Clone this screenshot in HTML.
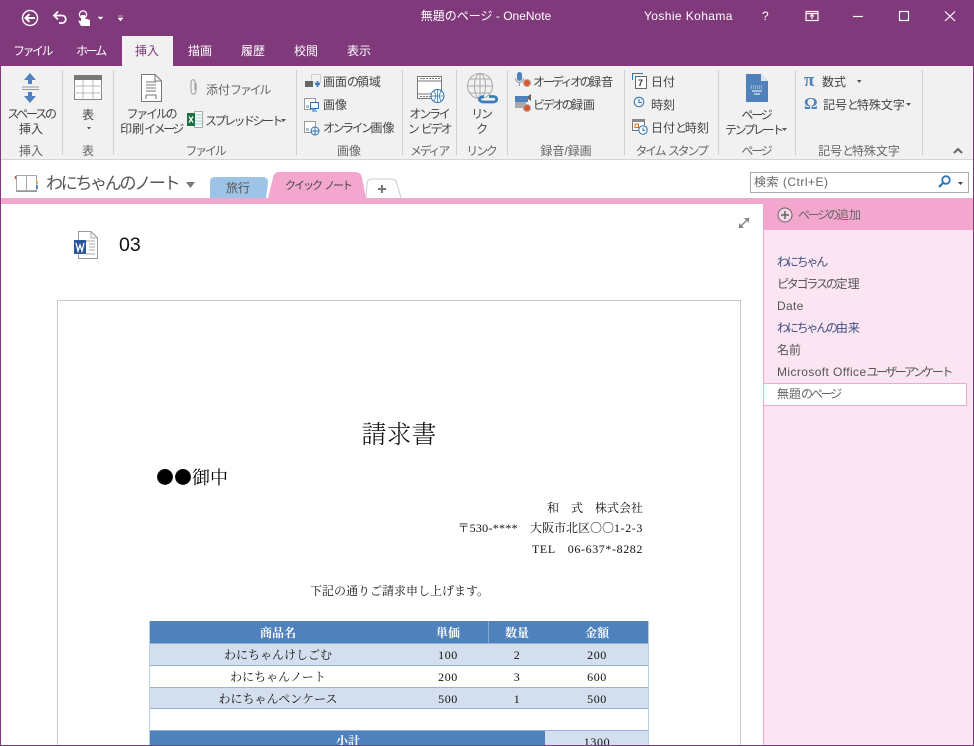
<!DOCTYPE html>
<html lang="ja"><head><meta charset="utf-8"><title>無題のページ - OneNote</title>
<style>
html,body{margin:0;padding:0;background:#fff}
#p{position:relative;width:974px;height:746px;overflow:hidden;background:#fff;font-family:"Liberation Sans","Noto Sans CJK JP",sans-serif;font-size:12px;color:#444}
.t{position:absolute;white-space:nowrap;line-height:16px}
.c{text-align:center;transform:translateX(-50%)}
.r{position:absolute}
.w{color:#fff}
.g{color:#666}
.sep{position:absolute;top:70px;height:85px;width:1px;background:#d0d0d0}
svg{position:absolute;overflow:visible}
.s{font-family:"Liberation Serif","Noto Serif CJK SC",serif;color:#111;font-size:12px}
i{font-style:normal;letter-spacing:-2.2px}
i.n{letter-spacing:-2.5px}
em{font-style:normal;letter-spacing:.6px}
em.n{letter-spacing:.3px}
b.o{font-weight:normal;font-family:"Noto Serif CJK SC",serif}
</style></head><body><div id="p">
<div class="r" style="left:0;top:0;width:974px;height:66px;background:#80397b"></div>
<div class="r" style="left:1px;top:66px;width:972px;height:93px;background:#f1f1f1"></div>
<div class="r" style="left:1px;top:159px;width:972px;height:1px;background:#d4d4d4"></div>
<div class="r" style="left:122px;top:36px;width:51px;height:30px;background:#f1f1f1"></div>
<div class="r" style="left:0;top:66px;width:1px;height:680px;background:#80397b"></div>
<div class="r" style="left:973px;top:66px;width:1px;height:680px;background:#80397b"></div>

<!-- QAT -->
<svg style="left:0;top:0" width="140" height="36" fill="none" stroke="#fff">
<circle cx="30" cy="18" r="7.5" stroke-width="1.4"/><path d="M35 18H26M29.5 14.2L25.5 18L29.5 21.8" stroke-width="2"/>
<path d="M55 15.5H62C67 15.5 67 23 62 23H59M58 11.5L54 15.500L58 19.500" stroke-width="1.8"/>
<path d="M81 15V21L78 20.500L81 26H90V20L85 18.500V15Z" fill="#fff" stroke="none"/><circle cx="83" cy="14.500" r="3.600" stroke-width="1.300"/>
<path d="M98 17H103L100.500 19.500Z M118 16H123 M118 18H123L120.500 21Z" fill="#fff" stroke="#fff" stroke-width=".5"/>
</svg>
<div class="t w c" style="left:486px;top:8px">無題のページ - OneNote</div>
<div class="t w" style="left:644px;top:8px;letter-spacing:.4px">Yoshie Kohama</div>
<div class="t w" style="left:762px;top:8px">?</div>
<svg style="left:800px;top:0" width="174" height="36" fill="none" stroke="#fff" stroke-width="1.2">
<rect x="6" y="11.500" width="12" height="9"/><path d="M6 13.500H18M12 19V15M10 16.500L12 14.500L14 16.500"/>
<path d="M53 16.500H63"/><rect x="99.500" y="11.500" width="9" height="9"/><path d="M145 11.500L155 21M155 11.500L145 21"/>
</svg>
<!-- tabs -->
<div class="t w" style="left:13px;top:43px"><i class="n">ファイル</i></div>
<div class="t w" style="left:76px;top:43px"><i>ホーム</i></div>
<div class="t" style="left:135px;top:43px;color:#80397b">挿入</div>
<div class="t w" style="left:188px;top:43px">描画</div>
<div class="t w" style="left:241px;top:43px">履歴</div>
<div class="t w" style="left:294px;top:43px">校閲</div>
<div class="t w" style="left:347px;top:43px">表示</div>
<!-- separators -->
<div class="sep" style="left:62px"></div><div class="sep" style="left:113px"></div><div class="sep" style="left:296px"></div><div class="sep" style="left:402px"></div><div class="sep" style="left:456px"></div><div class="sep" style="left:507px"></div><div class="sep" style="left:624px"></div><div class="sep" style="left:718px"></div><div class="sep" style="left:795px"></div><div class="sep" style="left:922px"></div>
<!-- ribbon icons -->
<svg style="left:0;top:66px" width="974" height="90" fill="none">
<g fill="#4f81bd"><path d="M30 7L36 14H32V18H28V14H24Z"/><path d="M30 37L36 30H32V26H28V30H24Z"/></g>
<path d="M22 21H39M22 23.500H39" stroke="#999"/>
<rect x="74.500" y="9.500" width="27" height="24" fill="#fff" stroke="#888"/><rect x="74" y="9" width="28" height="5" fill="#777"/><path d="M74 20H102M74 27H102M83 14V33M93 14V33" stroke="#bbb"/>
<path d="M141.500 8.500H155L161.500 15V35.500H141.500Z" fill="#fff" stroke="#777"/><path d="M155 8.500V15H161.500M146 16H156M146 19H156M146 22H156M146 25H156M146 29H156V33M146 29V33" stroke="#777"/>
<path d="M195 24V16C195 13 191 13 191 16V25C191 29 196 29 196 25V17" stroke="#999"/>
<rect x="194.500" y="45.500" width="8" height="16" fill="#fff" stroke="#aaa"/><path d="M195 49H202M195 52H202M195 55H202M195 58H202" stroke="#9cc"/>
<rect x="187" y="47" width="8" height="13" fill="#1e7145"/><path d="M189 50.500L193 56.500M193 50.500L189 56.500" stroke="#fff" stroke-width="1.300"/>
<!-- capture -->
<rect x="311.500" y="8.500" width="9" height="8" stroke="#aaa" stroke-dasharray="1 1"/><rect x="305" y="15" width="8" height="6" fill="#666"/><path d="M317.500 15V21M315 18H320" stroke="#3f7fbf" stroke-width="2"/>
<rect x="304.500" y="32.500" width="11" height="11" fill="#fff" stroke="#999"/><rect x="310.500" y="36.500" width="8" height="6" fill="#fff" stroke="#2b75b5"/><path d="M312 45H317" stroke="#2b75b5"/><path d="M306 42V39H309V42Z" fill="#a9c3e0"/>
<rect x="304.500" y="55.500" width="11" height="11" fill="#fff" stroke="#999"/><circle cx="315" cy="65" r="4" fill="#fff" stroke="#2b75b5"/><path d="M311 65H319M315 61V69" stroke="#2b75b5"/><path d="M306 65V62H309V65Z" fill="#a9c3e0"/>
<!-- video -->
<rect x="417.500" y="10.500" width="24" height="22" fill="#fff" stroke="#777"/><path d="M418 15H441M418 28H441" stroke="#777"/><path d="M420 12.500H440M420 30.500H436" stroke="#777" stroke-dasharray="2 1"/>
<circle cx="437.500" cy="30" r="6.500" fill="#fff" stroke="#2b75b5"/><path d="M431 30H444M437.500 23.500V36.500M434 25C436 28 436 32 434 35M441 25C439 28 439 32 441 35" stroke="#2b75b5" stroke-width=".8"/>
<!-- link -->
<circle cx="480" cy="20" r="12.500" stroke="#aaa"/><path d="M467.500 20H492.500M480 7.500V32.500M470 13H490M470 27H490" stroke="#aaa"/><ellipse cx="480" cy="20" rx="5.500" ry="12.500" stroke="#aaa"/>
<path d="M484 30.500C478 30.500 478 36 484 36H489M489 30.500H493C498 30.500 498 36 493 36H487" stroke="#3b7cba" stroke-width="2.800"/>
<!-- audio -->
<rect x="517" y="6" width="5" height="9" rx="2.500" fill="#4f81bd"/><path d="M515.500 12C515.500 18 523.500 18 523.500 12M519.500 17V20" stroke="#999"/><circle cx="527" cy="17" r="3.500" fill="#e0562d" stroke="#aaa"/>
<rect x="515" y="30" width="13" height="6" fill="#4f81bd"/><rect x="515" y="36" width="11" height="6" fill="#aaa"/><path d="M528 30L531 28V35L528 33Z" fill="#666"/><circle cx="527" cy="42" r="3.500" fill="#e0562d" stroke="#aaa"/>
<!-- date -->
<path d="M632.500 14V7.500H643" stroke="#2b75b5"/><rect x="635.500" y="10.500" width="11" height="12" fill="#fff" stroke="#666"/>
<circle cx="639" cy="36" r="4.800" stroke="#2b75b5"/><path d="M639 33V36.500H642" stroke="#2b75b5"/>
<rect x="632.500" y="53.500" width="12" height="11" fill="#fff" stroke="#777"/><rect x="632" y="53" width="13" height="3" fill="#888"/><rect x="635" y="58" width="3.500" height="3.500" stroke="#e07020"/><circle cx="643" cy="64" r="4.200" fill="#fff" stroke="#2b75b5"/><path d="M643 61.500V64.500H645" stroke="#2b75b5"/>
<!-- page -->
<path d="M746 8H761L768 15V36H746Z" fill="#4f81bd"/><path d="M761 8V15H768Z" fill="#dce6f2"/><path d="M751 20H763M751 22H763" stroke="#d8e4f2" stroke-dasharray="1 1"/><path d="M752 25H762M754 28H760" stroke="#fff"/>
<!-- collapse -->
<path d="M954 87L958 83L962 87" stroke="#666" stroke-width="2"/>
<!-- small arrows -->
<path d="M87 61H91L89 63.500Z M281 53H286L283.500 56Z M857 14H861.500L859.200 17Z M906 37H911L908.500 40Z M782 62H787L784.500 65Z" fill="#555"/>
</svg>
<div class="t s" style="left:804px;top:70px;font-size:19px;line-height:22px;color:#4f81bd;font-weight:bold">π</div>
<div class="t s" style="left:804px;top:94px;font-size:17px;line-height:20px;color:#4f81bd;font-weight:bold">Ω</div>
<div class="t" style="left:638px;top:77px;font-size:9px;line-height:12px;font-weight:bold;color:#333">7</div>

<!-- ribbon text -->
<div class="t c" style="left:31px;top:107px;line-height:15px"><i>スペースの</i><br>挿入</div>
<div class="t c g" style="left:31px;top:143px">挿入</div>
<div class="t c" style="left:88px;top:107px">表</div>
<div class="t c g" style="left:88px;top:143px">表</div>
<div class="t c" style="left:151px;top:107px;line-height:15px"><i>ファイルの</i><br>印刷<i class="n">イメージ</i></div>
<div class="t g" style="left:206px;top:82px">添付<i>ファイル</i></div>
<div class="t" style="left:205px;top:113px"><i class="n">スプレッドシート</i></div>
<div class="t c g" style="left:205px;top:143px"><i>ファイル</i></div>
<div class="t" style="left:323px;top:74px">画面<i>の</i>領域</div>
<div class="t" style="left:323px;top:97px">画像</div>
<div class="t" style="left:323px;top:120px"><i class="n">オンライン</i>画像</div>
<div class="t c g" style="left:349px;top:143px">画像</div>
<div class="t c" style="left:429px;top:107px;line-height:15px"><i>オンライ</i><br><i>ン</i> <i>ビデオ</i></div>
<div class="t c g" style="left:429px;top:143px"><i>メディア</i></div>
<div class="t c" style="left:481px;top:107px;line-height:15px"><i>リン</i><br><i>ク</i></div>
<div class="t c g" style="left:481px;top:143px"><i>リンク</i></div>
<div class="t" style="left:533px;top:74px"><i class="n">オーディオの</i>録音</div>
<div class="t" style="left:533px;top:97px"><i class="n">ビデオの</i>録画</div>
<div class="t c g" style="left:566px;top:143px">録音/録画</div>
<div class="t" style="left:651px;top:74px">日付</div>
<div class="t" style="left:651px;top:97px">時刻</div>
<div class="t" style="left:651px;top:120px">日付<i>と</i>時刻</div>
<div class="t c g" style="left:671px;top:143px"><i>タイム</i> <i>スタンプ</i></div>
<div class="t c" style="left:756px;top:107px"><i>ページ</i></div>
<div class="t" style="left:725px;top:122px"><i class="n">テンプレート</i></div>
<div class="t c g" style="left:756px;top:143px"><i>ページ</i></div>
<div class="t" style="left:822px;top:74px">数式</div>
<div class="t" style="left:823px;top:97px">記号<i>と</i>特殊文字</div>
<div class="t c g" style="left:859px;top:143px">記号<i>と</i>特殊文字</div>

<!-- notebook bar -->
<svg style="left:0;top:160px" width="420" height="40" fill="none">
<path d="M16.500 15.500H26.500V30.500H16.500ZM26.500 15.500H36.500V30.500H26.500Z" stroke="#aaa"/><path d="M16 31.500H37" stroke="#999"/><path d="M15.500 16V19" stroke="#d9522c" stroke-width="1.500"/><path d="M37 21V24" stroke="#e3a21a" stroke-width="1.500"/><path d="M37 25V29" stroke="#2b75b5" stroke-width="1.500"/>
<path d="M186 22H195L190.500 28Z" fill="#777"/>
<path d="M210 38V22Q210 17 215 17H262Q268 17 268 22L266 38Z" fill="#9dc3e6"/>
<path d="M268 38L273 18Q274 12 279 12H355Q361 12 362 18L366 38Z" fill="#f3a6ce"/>
<path d="M366 38L367 24Q367 19 372 19H392Q396 19 397 24L401 38" fill="#fff" stroke="#ccc"/>
<path d="M382 25V33M378 29H386" stroke="#777" stroke-width="2"/>
</svg>
<div class="t" style="left:46px;top:172px;font-size:17px;line-height:24px;color:#555;letter-spacing:-2.300px">わにちゃんのノート</div>
<div class="t" style="left:226px;top:180px;color:#555">旅行</div>
<div class="t" style="left:285px;top:178px;font-size:11px;color:#444"><i style="letter-spacing:-2px">クイック</i> <i style="letter-spacing:-2px">ノート</i></div>
<div class="r" style="left:750px;top:172px;width:217px;height:19px;border:1px solid #ababab;background:#fff"></div>
<div class="t" style="left:754px;top:174px;color:#666;letter-spacing:.5px">検索 (Ctrl+E)</div>
<svg style="left:935px;top:172px" width="32" height="20" fill="none"><circle cx="11" cy="8" r="3.800" stroke="#2b75b5" stroke-width="1.800"/><path d="M8 11L4 15" stroke="#2b75b5" stroke-width="2.200"/><path d="M23 10H28L25.500 13Z" fill="#444"/></svg>

<!-- section -->
<div class="r" style="left:1px;top:198px;width:972px;height:6px;background:#f3a6ce"></div>
<div class="r" style="left:763px;top:204px;width:210px;height:26px;background:#f3a6ce"></div>
<div class="r" style="left:763px;top:230px;width:210px;height:516px;background:#fbe5f2;border-left:1px solid #f3a6ce;box-sizing:border-box"></div>
<svg style="left:776px;top:206px" width="20" height="20" fill="none" stroke="#666"><circle cx="9" cy="9" r="7" fill="#f8d4e7"/><path d="M9 5V13M5 9H13" stroke-width="1.500"/></svg>
<div class="t" style="left:798px;top:207px;color:#666"><i>ページの</i>追加</div>
<div class="t" style="left:777px;top:254px;color:#3e4f80"><i>わにちゃん</i></div>
<div class="t" style="left:777px;top:276px;color:#555"><i>ピタゴラスの</i>定理</div>
<div class="t" style="left:777px;top:298px;color:#555;letter-spacing:.3px">Date</div>
<div class="t" style="left:777px;top:320px;color:#3e4f80"><i>わにちゃんの</i>由来</div>
<div class="t" style="left:777px;top:342px;color:#555">名前</div>
<div class="t" style="left:777px;top:364px;color:#555"><span style="letter-spacing:.4px">Microsoft Office</span><i class="n">ユーザーアンケート</i></div>
<div class="r" style="left:763px;top:383px;width:204px;height:23px;background:#fff;border:1px solid #f3a6ce;box-sizing:border-box"></div>
<div class="t" style="left:777px;top:386px;color:#666">無題<i>のページ</i></div>

<!-- page content -->
<svg style="left:736px;top:215px" width="16" height="16" fill="none"><path d="M3 13L13 3" stroke="#888" stroke-width="1.500"/><path d="M8 3H13V8Z M3 8V13H8Z" fill="#888"/></svg>
<svg style="left:72px;top:230px" width="28" height="30" fill="none">
<path d="M6.500 1.500H19L25.500 8V28.500H6.500Z" fill="#fff" stroke="#999"/><path d="M19 1.500V8H25.500M14 11H23M17 14H23M17 17H23M17 20H23M14 24H23" stroke="#aaa"/>
<rect x="2" y="10" width="12" height="14" fill="#2b579a"/><path d="M4 13L6 21L8 15L10 21L12 13" stroke="#fff" stroke-width="1.300"/>
</svg>
<div class="t" style="left:119px;top:234px;font-size:19.500px;line-height:22px;color:#111">03</div>
<div class="r" style="left:57px;top:300px;width:684px;height:460px;border:1px solid #c8c8c8;box-sizing:border-box"></div>

<div class="t s c" style="left:399px;top:421px;font-size:25px;line-height:30px;font-weight:300">請求書</div>
<div class="t s" style="left:156px;top:466px;font-size:18px;line-height:22px;color:#000"><b class="o">●●</b>御中</div>
<div class="t s" style="right:331px;top:500px">和　式　株式会社</div>
<div class="t s" style="right:331px;top:520px">〒<em class="n">530-****</em>　大阪市北区<b class="o">○○</b><em>1-2-3</em></div>
<div class="t s" style="right:331px;top:541px"><em>TEL</em>　<em>06-637*-8282</em></div>
<div class="t s" style="left:310px;top:583px">下記の通りご請求申し上げます。</div>

<!-- table -->
<div class="r" style="left:149px;top:621px;width:500px;height:125px;background:#fff;overflow:hidden">
<div class="r" style="left:0;top:0;width:500px;height:22px;background:#4f81bd"></div>
<div class="r" style="left:0;top:22px;width:500px;height:22px;background:#d3dfee"></div>
<div class="r" style="left:0;top:66px;width:500px;height:22px;background:#d3dfee"></div>
<div class="r" style="left:0;top:22px;width:500px;height:1px;background:#95b3d7"></div>
<div class="r" style="left:0;top:44px;width:500px;height:1px;background:#95b3d7"></div>
<div class="r" style="left:0;top:66px;width:500px;height:1px;background:#95b3d7"></div>
<div class="r" style="left:0;top:87px;width:500px;height:1px;background:#95b3d7"></div>
<div class="r" style="left:0;top:109px;width:396px;height:16px;background:#4f81bd"></div>
<div class="r" style="left:396px;top:109px;width:104px;height:16px;background:#d3dfee"></div>
<div class="r" style="left:0;top:109px;width:500px;height:1px;background:#95b3d7"></div>
<div class="r" style="left:0;top:0;width:1px;height:125px;background:#b8cce4"></div>
<div class="r" style="left:499px;top:0;width:1px;height:125px;background:#b8cce4"></div>
<div class="r" style="left:339px;top:0;width:1px;height:22px;background:#7fa3cf"></div>
</div>
<div class="t s c" style="left:278px;top:625px;color:#fff;font-weight:bold">商品名</div>
<div class="t s c" style="left:448px;top:625px;color:#fff;font-weight:bold">単価</div>
<div class="t s c" style="left:517px;top:625px;color:#fff;font-weight:bold">数量</div>
<div class="t s c" style="left:597px;top:625px;color:#fff;font-weight:bold">金額</div>
<div class="t s c" style="left:278px;top:647px">わにちゃんけしごむ</div>
<div class="t s c" style="left:448px;top:647px"><em>100</em></div>
<div class="t s c" style="left:517px;top:647px"><em>2</em></div>
<div class="t s c" style="left:597px;top:647px"><em>200</em></div>
<div class="t s c" style="left:278px;top:669px">わにちゃんノート</div>
<div class="t s c" style="left:448px;top:669px"><em>200</em></div>
<div class="t s c" style="left:517px;top:669px"><em>3</em></div>
<div class="t s c" style="left:597px;top:669px"><em>600</em></div>
<div class="t s c" style="left:278px;top:691px">わにちゃんペンケース</div>
<div class="t s c" style="left:448px;top:691px"><em>500</em></div>
<div class="t s c" style="left:517px;top:691px"><em>1</em></div>
<div class="t s c" style="left:597px;top:691px"><em>500</em></div>
<div class="t s c" style="left:348px;top:733px;color:#fff;font-weight:bold">小計</div>
<div class="t s c" style="left:597px;top:734px"><em>1300</em></div>
<div class="r" style="left:0;top:745px;width:974px;height:1px;background:#80397b"></div>
</div></body></html>
